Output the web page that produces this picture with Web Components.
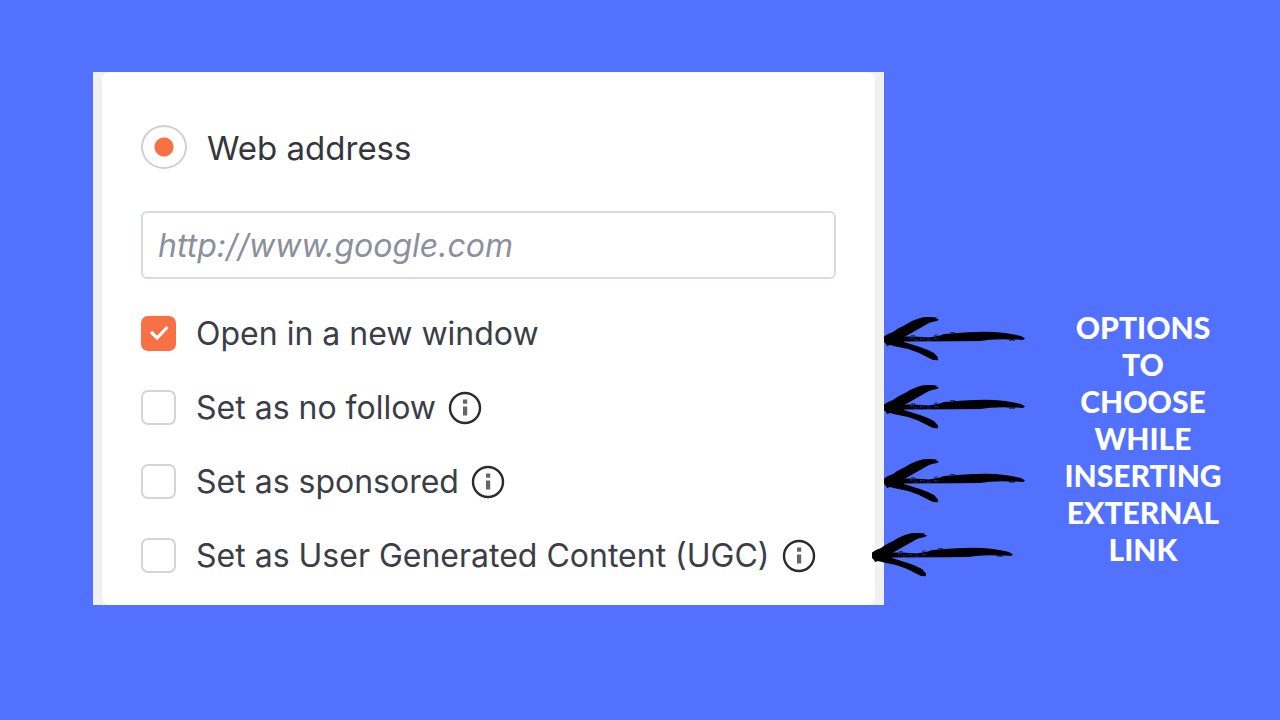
<!DOCTYPE html>
<html lang="en">
<head>
<meta charset="utf-8">
<title>External link options</title>
<style>
  body { margin: 0; min-height: 100vh; background: #5271ff; --backdrop: #5271ff; font-family: Inter, "Open Sans", sans-serif; }
</style>
</head>
<body>
<link-guide></link-guide>

<script>
  class BaseElement extends HTMLElement {
    constructor() {
      super();
      this.attachShadow({ mode: "open" }).innerHTML = this.render();
    }
    render() { return ""; }
  }

  customElements.define("info-button", class extends BaseElement {
    render() {
      return `
        <style>
          :host { display: block; }
          button { display: block; padding: 0; border: 0; background: none; cursor: pointer; }
          svg { display: block; width: 34px; height: 34px; }
        </style>
        <button type="button" aria-label="More information">
          <svg viewBox="0 0 34 34" aria-hidden="true">
            <circle cx="17" cy="17" r="15" fill="none" stroke="#2b2b2b" stroke-width="2.4"/>
            <path d="M15 8.5h4.200v4.200h-4.200zM15 15.500h4.200v9h-4.200z" fill="#666"/>
          </svg>
        </button>`;
    }
  });

  customElements.define("option-check", class extends BaseElement {
    render() {
      const checked = this.hasAttribute("checked") ? "checked" : "";
      return `
        <style>
          :host { display: flex; align-items: center; gap: 12px; height: 35px; color: #3b3e46; font-size: 32px; line-height: 40px; }
          label { display: flex; align-items: center; gap: 20px; white-space: nowrap; }
          .box { display: grid; flex: none; }
          .box > * { grid-area: 1 / 1; }
          input { appearance: none; box-sizing: border-box; width: 35px; height: 35px; margin: 0; border: 2px solid #d4d5d8; border-radius: 7px; background: #fff; }
          input:checked { border-color: #f97044; background: #f97044; }
          svg { width: 35px; height: 35px; pointer-events: none; visibility: hidden; }
          input:checked + svg { visibility: visible; }
        </style>
        <label>
          <span class="box">
            <input type="checkbox" ${checked}>
            <svg viewBox="0 0 35 35" aria-hidden="true"><path d="M10 16l6 6 10.500-11" fill="none" stroke="#fff" stroke-width="3.200"/></svg>
          </span>
          <span><slot></slot></span>
        </label>
        <slot name="info"></slot>`;
    }
  });

  customElements.define("address-radio", class extends BaseElement {
    render() {
      return `
        <style>
          :host { display: block; color: #34363c; font-size: 33px; line-height: 44px; }
          label { display: flex; align-items: center; gap: 20px; }
          span { padding-top: 3px; }
          input { appearance: none; box-sizing: border-box; flex: none; width: 46px; height: 44px; margin: 0; border: 2px solid #d0d0d3; border-radius: 50%;
            background: radial-gradient(circle, #f97044 9px, #fff 10px); }
        </style>
        <label><input type="radio" name="target" checked><span><slot></slot></span></label>`;
    }
  });

  customElements.define("address-field", class extends BaseElement {
    render() {
      return `
        <style>
          :host { display: block; }
          input { box-sizing: border-box; display: block; width: 100%; height: 68px; padding: 0 15px; border: 2px solid #d5dde1; border-radius: 6px;
            background: #fff; font: italic 32px/40px Inter, "Open Sans", sans-serif; }
          input::placeholder { color: #8b909c; opacity: 1; }
        </style>
        <input type="url" aria-label="Web address" placeholder="http://www.google.com">`;
    }
  });

  customElements.define("link-panel", class extends BaseElement {
    render() {
      return `
        <style>
          :host { display: block; padding: 0 9px; background: #f1f1f1; }
          form { padding: 51px 39px 32px; border-radius: 8px; background: #fff; }
          address-field { margin-top: 41px; }
          .options { display: grid; gap: 39px; margin-top: 37px; }
        </style>
        <form>
          <address-radio>Web address</address-radio>
          <address-field></address-field>
          <div class="options">
            <option-check checked>Open in a new window</option-check>
            <option-check>Set as no follow<info-button slot="info"></info-button></option-check>
            <option-check>Set as sponsored<info-button slot="info"></info-button></option-check>
            <option-check>Set as User Generated Content (UGC)<info-button slot="info"></info-button></option-check>
          </div>
        </form>`;
    }
  });

  customElements.define("brush-arrow", class extends BaseElement {
    render() {
      return `
        <style>
          :host { display: block; }
          svg { display: block; width: 141px; height: 44px; }
        </style>
        <svg viewBox="0 0 141 44" aria-hidden="true">
          <path d="M0 19.500 4 17 9 15 14 11.500 21 8 27 4.500 33 2 39 .2 46 0 53 .5 52 1.600 55 2.600 53 4 48 5 44 6.500 38 10 30 14.500 24 18 20 20V25L28 27.500 36 30 44 33 50 36 54 40.500 54 43.300 49 43 43 40 34 35.500 24 32 12 29.500 6 28 3 29 2 27 0 25Z"/>
          <path d="M16 19.500 30 19.500 45 20.500 56 18.500 60 17 73 16 85 15.200 100 14.800 111 15 121 16 130 17.500 137 19 141 21.500 139 23 133 22.600 128 22.800 119 22.300 106 22.800 96 24 70 24.300 16 24.600Z"/>
          <path d="M26 21h4M36 21.800h5M31 23h3M43 23h4M50 21.800h4" fill="none" stroke="var(--backdrop)" stroke-width=".6" stroke-dasharray="1.800 .9"/>
          <path d="M50 18.400l4-.6M66 15.500h5M27 18.600h4M125 23.300h6" fill="none" stroke="#000" stroke-width=".6"/>
        </svg>`;
    }
  });

  customElements.define("guide-note", class extends BaseElement {
    render() {
      return `
        <style>
          :host { display: block; color: #fff; font: 900 30px/37px Lato, "Open Sans", sans-serif; text-align: center; white-space: nowrap; }
          p { margin: 0; }
        </style>
        <p><slot></slot></p>`;
    }
  });

  customElements.define("link-guide", class extends BaseElement {
    render() {
      return `
        <style>
          :host { display: grid; grid-template-columns: minmax(0, 1fr) 141px 198px; align-items: start; padding: 72px 57px 72px 93px; }
          .arrows { display: grid; gap: 30px; margin-top: 245px; }
          brush-arrow:first-child { margin-bottom: -6px; }
          brush-arrow:last-child { position: relative; left: -12px; }
          guide-note { margin-top: 237px; padding-left: 38px; }
        </style>
        <link-panel></link-panel>
        <div class="arrows">
          <brush-arrow></brush-arrow>
          <brush-arrow></brush-arrow>
          <brush-arrow></brush-arrow>
          <brush-arrow></brush-arrow>
        </div>
        <guide-note>OPTIONS<br>TO<br>CHOOSE<br>WHILE<br>INSERTING<br>EXTERNAL<br>LINK</guide-note>`;
    }
  });
</script>
</body>
</html>
